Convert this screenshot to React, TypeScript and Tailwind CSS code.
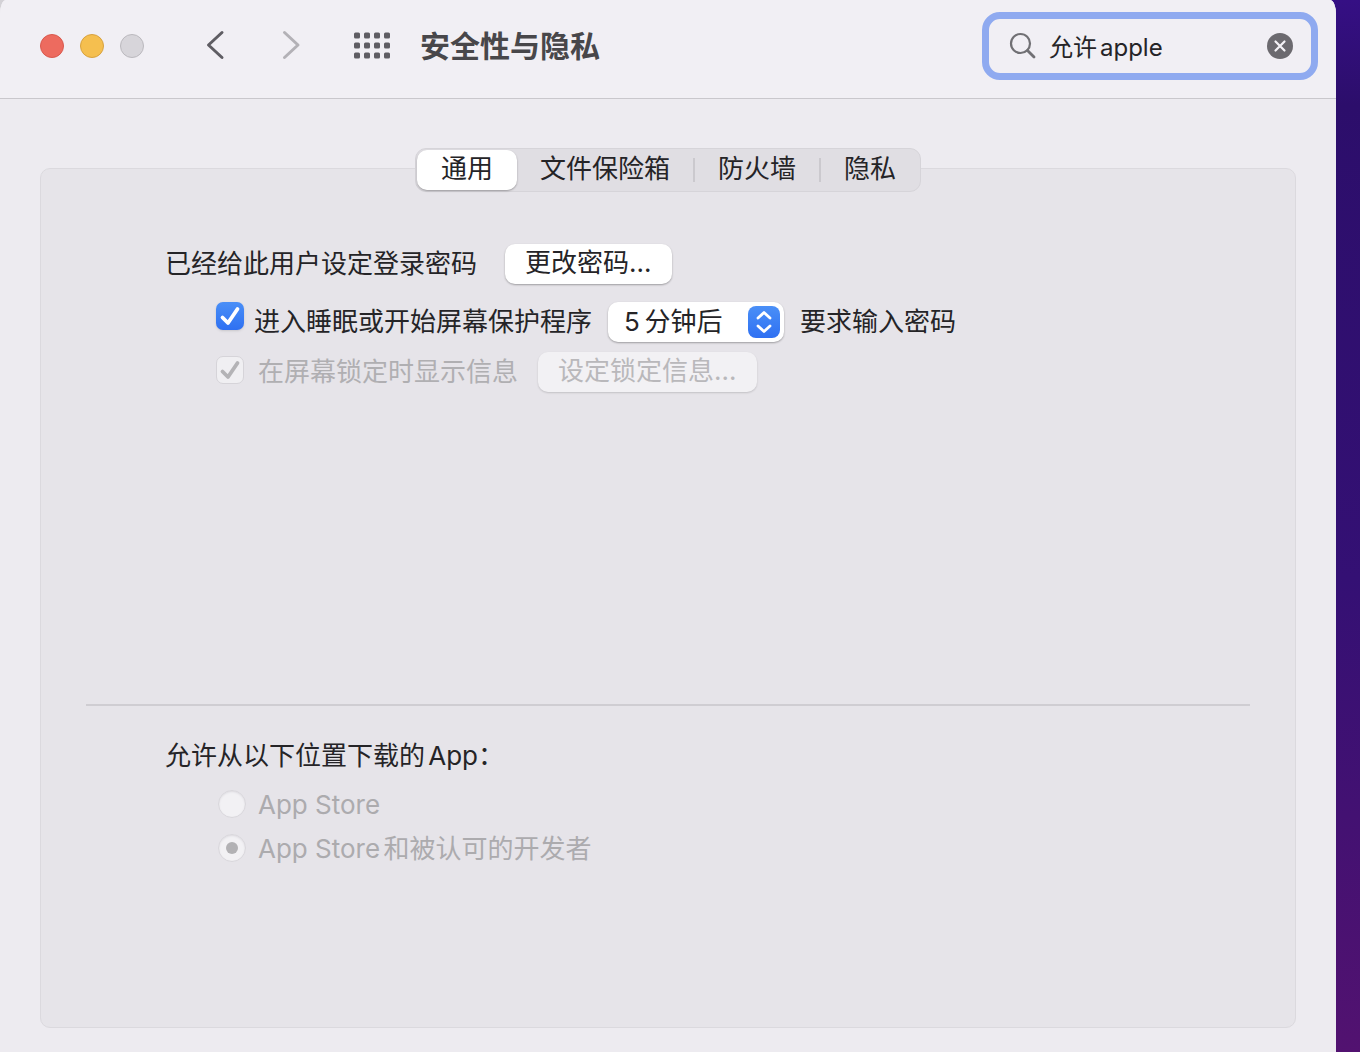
import { useState } from 'react'

const TABS = ['通用', '文件保险箱', '防火墙', '隐私']

function CheckBox({ id, disabled = false }: { id: string; disabled?: boolean }) {
  return (
    <span className="grid size-7 shrink-0">
      <input
        id={id}
        type="checkbox"
        defaultChecked
        disabled={disabled}
        className="peer col-start-1 row-start-1 size-7 appearance-none rounded-[7px] bg-white shadow-sm checked:bg-linear-to-b checked:from-[#4a8ff7] checked:to-[#2f70f2] disabled:border disabled:border-[#d6d4d9] disabled:bg-[#f0eff2] disabled:bg-none disabled:shadow-none"
      />
      <svg
        viewBox="0 0 28 28"
        className="pointer-events-none invisible col-start-1 row-start-1 size-7 text-white peer-checked:visible peer-disabled:text-[#b4b3b6]"
        fill="none"
        stroke="currentColor"
        strokeWidth="3.8"
        strokeLinecap="round"
        strokeLinejoin="round"
        aria-hidden="true"
      >
        <path d="M6.5 15.5 L12 21 L21.5 7" />
      </svg>
    </span>
  )
}

function SourceOption({ id, label, selected = false }: { id: string; label: string; selected?: boolean }) {
  return (
    <div className="flex h-11 items-center gap-3">
      <span className="grid size-7 place-items-center">
        <input
          id={id}
          type="radio"
          name="source"
          defaultChecked={selected}
          disabled
          className="peer col-start-1 row-start-1 size-7 appearance-none rounded-full border border-[#d9d7dc] bg-[#f2f1f4] shadow-[inset_0_1px_2px_#dddbe0]"
        />
        <span className="pointer-events-none invisible col-start-1 row-start-1 size-3 rounded-full bg-[#b2b1b4] peer-checked:visible" />
      </span>
      <label htmlFor={id} className="pt-0.5 text-[#acabae]">
        {label}
      </label>
    </div>
  )
}

function Toolbar() {
  const [query, setQuery] = useState('允许apple')

  return (
    <header className="flex h-[99px] items-center border-b border-[#c9c7cc] bg-[#f1eff4] pr-[18px] pb-1.5 pl-10">
      <div className="flex gap-4">
        <button aria-label="关闭" className="size-6 rounded-full border border-[#d9594e] bg-[#ed6b5f]" />
        <button aria-label="最小化" className="size-6 rounded-full border border-[#d8a23f] bg-[#f5bf4f]" />
        <button aria-label="缩放" disabled className="size-6 rounded-full border border-[#bbb9be] bg-[#d7d5da]" />
      </div>
      <nav className="ml-[60px] flex items-center">
        <button aria-label="后退" className="text-[#5f5d63]">
          <svg width="24" height="32" viewBox="0 0 24 32" fill="none" stroke="currentColor" strokeWidth="3" strokeLinecap="round" strokeLinejoin="round">
            <path d="M18 2.5 L4.5 15 L18 27.5" />
          </svg>
        </button>
        <button aria-label="前进" disabled className="ml-[52px] text-[#b3b1b6]">
          <svg width="24" height="32" viewBox="0 0 24 32" fill="none" stroke="currentColor" strokeWidth="3" strokeLinecap="round" strokeLinejoin="round">
            <path d="M4.5 2.5 L18 15 L4.5 27.5" />
          </svg>
        </button>
        <button aria-label="显示全部" className="ml-[50px] text-[#5f5d63]">
          <svg width="36" height="28" viewBox="0 0 36 28" fill="currentColor">
            {[0, 10, 20, 30].map((x) =>
              [0.5, 10.5, 20.5].map((y) => <rect key={`${x}-${y}`} x={x} y={y} width="6" height="6" rx="1.5" />),
            )}
          </svg>
        </button>
      </nav>
      <h1 className="ml-[30px] text-[30px] leading-10 font-bold text-[#48474a]">安全性与隐私</h1>
      <div className="ml-auto flex h-[68px] w-[336px] items-center rounded-[18px] border-[7px] border-[#8faaf0] px-5">
        <svg width="28" height="28" viewBox="0 0 28 28" fill="none" stroke="#717074" strokeWidth="2.2" strokeLinecap="round" className="shrink-0" aria-hidden="true">
          <circle cx="11.5" cy="11.5" r="9.5" />
          <path d="M18.5 18.5 L25 25" strokeWidth="2.8" />
        </svg>
        <input
          type="text"
          aria-label="搜索"
          value={query}
          onChange={(e) => setQuery(e.target.value)}
          className="ml-3 min-w-0 flex-1 bg-transparent pt-1 text-2xl text-[#252427] outline-none [text-autospace:normal]"
        />
        <button aria-label="清除" onClick={() => setQuery('')} className="-mr-0.5 shrink-0">
          <svg width="26" height="26" viewBox="0 0 26 26">
            <circle cx="13" cy="13" r="13" fill="#6c6a6f" />
            <path d="M8.5 8.5 L17.5 17.5 M17.5 8.5 L8.5 17.5" stroke="#f4f2f6" strokeWidth="2.2" strokeLinecap="round" />
          </svg>
        </button>
      </div>
    </header>
  )
}

function Tabs() {
  const [active, setActive] = useState(0)

  return (
    <div role="tablist" className="-mt-[21px] flex h-11 self-center rounded-[11px] border border-[#d6d4d9] bg-[#e0dee3] p-px">
      {TABS.map((tab, i) => (
        <div key={tab} className="flex items-center">
          {i > 1 && <span className="h-6 w-0.5 bg-[#cbc9ce]" />}
          <button
            role="tab"
            aria-selected={i === active}
            onClick={() => setActive(i)}
            className={
              i === active
                ? 'h-10 rounded-[10px] bg-white px-6 pb-0.5 shadow-[0_1px_2px_#00000050]'
                : 'h-10 px-[23px] pb-0.5'
            }
          >
            {tab}
          </button>
        </div>
      ))}
    </div>
  )
}

export default function App() {
  return (
    <div className="flex min-h-screen bg-[linear-gradient(to_right,#d3d1d6_40px,transparent_40px),linear-gradient(#350f84,#2c0e6b_10%,#341074_55%,#521270)] pr-6 font-[Inter,'Noto_Sans_CJK_SC',sans-serif] text-[26px] leading-9 text-[#252427]">
      <div className="flex flex-1 flex-col overflow-hidden rounded-[6px_6px_0_0/14px_14px_0_0] bg-[#edebf0] [text-autospace:normal]">
        <Toolbar />
        <main className="mx-10 mt-[69px] mb-6 flex flex-1 flex-col rounded-[10px] border border-[#dbd9de] bg-[#e6e4e9]">
          <Tabs />
          <section className="mt-[52px] flex flex-col pl-[124px]">
            <div className="flex items-center gap-7">
              <span>已经给此用户设定登录密码</span>
              <button className="h-10 rounded-[10px] bg-white px-5 pb-0.5 shadow-[0_1px_2px_#00000050]">更改密码…</button>
            </div>
            <div className="mt-[18px] ml-[51px] flex items-center">
              <span className="self-start">
                <CheckBox id="require-password" />
              </span>
              <label htmlFor="require-password" className="ml-2.5">
                进入睡眠或开始屏幕保护程序
              </label>
              <span className="ml-4 grid w-44">
                <select
                  aria-label="延迟时间"
                  className="col-start-1 row-start-1 h-10 appearance-none rounded-[10px] bg-white px-4 shadow-[0_1px_2px_#00000050]"
                >
                  <option>{'5\u2009分钟后'}</option>
                </select>
                <span className="pointer-events-none col-start-1 row-start-1 mr-1 grid size-8 place-items-center self-center justify-self-end rounded-lg bg-linear-to-b from-[#4a8ff7] to-[#2f70f2]">
                  <svg width="16" height="24" viewBox="0 0 16 24" fill="none" stroke="#fff" strokeWidth="2.8" strokeLinecap="round" strokeLinejoin="round" aria-hidden="true">
                    <path d="M2 8 L8 2.5 L14 8 M2 16 L8 21.5 L14 16" />
                  </svg>
                </span>
              </span>
              <span className="ml-4">要求输入密码</span>
            </div>
            <div className="mt-2.5 ml-[51px] flex items-center">
              <span className="pb-1">
                <CheckBox id="lock-message" disabled />
              </span>
              <label htmlFor="lock-message" className="ml-3.5 text-[#b0afb2]">
                在屏幕锁定时显示信息
              </label>
              <button disabled className="ml-5 h-10 rounded-[10px] bg-[#f2f1f4] px-5 pb-0.5 text-[#b9b8bb] shadow-[0_1px_2px_#00000028]">
                设定锁定信息…
              </button>
            </div>
          </section>
          <hr className="mx-[45px] mt-[312px] border-t-2 border-[#cfcdd2]" />
          <fieldset className="mt-8 pl-[124px]">
            <legend>允许从以下位置下载的App：</legend>
            <div className="mt-2 ml-[53px]">
              <SourceOption id="source-store" label="App Store" />
              <SourceOption id="source-developers" label="App Store和被认可的开发者" selected />
            </div>
          </fieldset>
        </main>
      </div>
    </div>
  )
}
